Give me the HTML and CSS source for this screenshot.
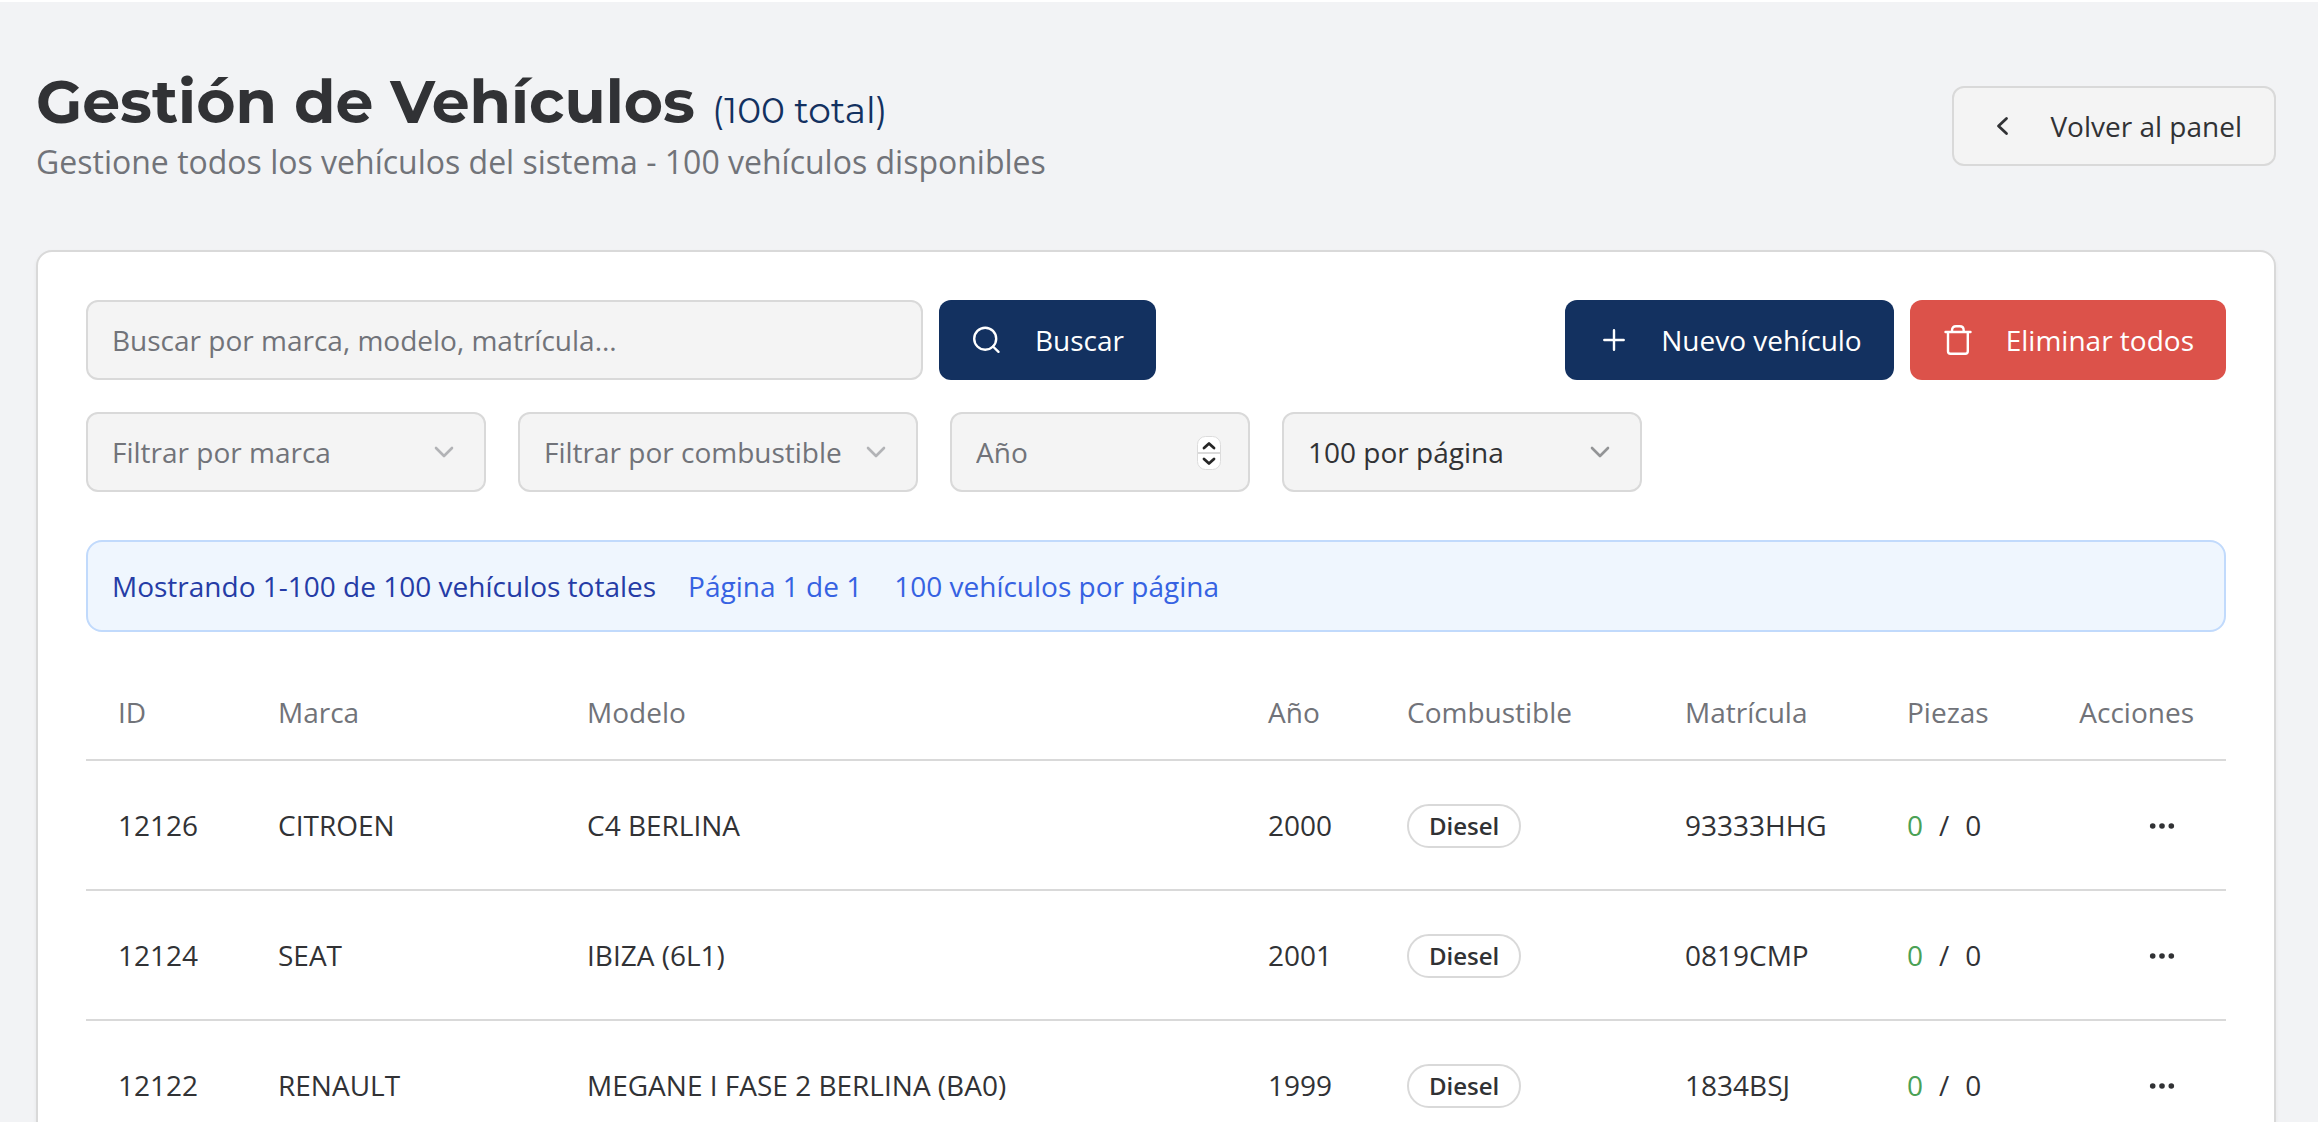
FILE: index.html
```html
<!DOCTYPE html>
<html lang="es">
<head>
<meta charset="utf-8">
<meta name="viewport" content="width=device-width, initial-scale=1">
<title>Gestión de Vehículos</title>
<link rel="stylesheet" href="styles.css">
</head>
<body>
<main class="page">
  <header class="page-header">
    <div class="heading">
      <h1 class="title">Gestión de Vehículos <span class="title-count">(100 total)</span></h1>
      <p class="subtitle">Gestione todos los vehículos del sistema - 100 vehículos disponibles</p>
    </div>
    <button type="button" class="btn btn-outline">
      <svg class="icon" viewBox="0 0 32 32" aria-hidden="true"><path d="M20.500 8.500L12.500 16L20.500 23.500" stroke-width="2.800"/></svg>
      Volver al panel
    </button>
  </header>

  <section class="card">
    <div class="toolbar">
      <form class="search">
        <input class="field search-input" type="search" aria-label="Buscar vehículos" placeholder="Buscar por marca, modelo, matrícula...">
        <button type="button" class="btn btn-primary">
          <svg class="icon" viewBox="0 0 32 32" aria-hidden="true"><circle cx="14.200" cy="14.700" r="11"/><path d="M22 22.500L27.500 27.800"/></svg>
          Buscar
        </button>
      </form>
      <div class="actions">
        <button type="button" class="btn btn-primary">
          <svg class="icon" viewBox="0 0 32 32" aria-hidden="true"><path d="M17 6.300V25.700M7.300 16H26.700"/></svg>
          Nuevo vehículo
        </button>
        <button type="button" class="btn btn-danger">
          <svg class="icon" viewBox="0 0 32 32" aria-hidden="true"><path d="M3.500 8H28.500M6 8V27.300Q6 29.800 8.500 29.800H23.300Q25.800 29.800 25.800 27.300V8M10 8V6.500Q10 2.300 14 2.300H17.700Q21.700 2.300 21.700 6.500V8"/></svg>
          Eliminar todos
        </button>
      </div>
    </div>

    <div class="filters">
      <select class="field select select-wide is-placeholder" aria-label="Marca"><option>Filtrar por marca</option></select>
      <select class="field select select-wide is-placeholder" aria-label="Combustible"><option>Filtrar por combustible</option></select>
      <div class="year">
        <input class="field year-input" type="number" aria-label="Año" placeholder="Año">
        <svg class="stepper" viewBox="0 0 24 34" aria-hidden="true"><rect x="0.500" y="0.500" width="23" height="33" rx="8" fill="#fff" stroke="#dcdcdc"/><path d="M1 17H23" stroke="#d9d9d9" stroke-width="2"/><path d="M7 12L12 7.500L17 12M7 23L12 27.500L17 23" fill="none" stroke="#262626" stroke-width="2.800" stroke-linecap="round" stroke-linejoin="round"/></svg>
      </div>
      <select class="field select select-page" aria-label="Vehículos por página"><option>100 por página</option></select>
    </div>

    <div class="summary">
      <span class="summary-main">Mostrando 1-100 de 100 vehículos totales</span>
      <span>Página 1 de 1</span>
      <span>100 vehículos por página</span>
    </div>

    <table class="vehicles">
      <colgroup><col class="c-id"><col class="c-brand"><col><col class="c-year"><col class="c-fuel"><col class="c-plate"><col class="c-parts"><col class="c-actions"></colgroup>
      <thead>
        <tr><th>ID</th><th>Marca</th><th>Modelo</th><th>Año</th><th>Combustible</th><th>Matrícula</th><th>Piezas</th><th class="end">Acciones</th></tr>
      </thead>
      <tbody>
        <tr>
          <td>12126</td><td>CITROEN</td><td>C4 BERLINA</td><td>2000</td><td><span class="badge">Diesel</span></td><td>93333HHG</td>
          <td><div class="parts"><span class="parts-ok">0</span><span>/</span><span>0</span></div></td>
          <td class="end"><button type="button" class="menu" aria-label="Acciones"><svg class="icon icon-dots" viewBox="0 0 32 32" aria-hidden="true"><circle cx="6.700" cy="17" r="2.800"/><circle cx="16" cy="17" r="2.800"/><circle cx="25.300" cy="17" r="2.800"/></svg></button></td>
        </tr>
        <tr>
          <td>12124</td><td>SEAT</td><td>IBIZA (6L1)</td><td>2001</td><td><span class="badge">Diesel</span></td><td>0819CMP</td>
          <td><div class="parts"><span class="parts-ok">0</span><span>/</span><span>0</span></div></td>
          <td class="end"><button type="button" class="menu" aria-label="Acciones"><svg class="icon icon-dots" viewBox="0 0 32 32" aria-hidden="true"><circle cx="6.700" cy="17" r="2.800"/><circle cx="16" cy="17" r="2.800"/><circle cx="25.300" cy="17" r="2.800"/></svg></button></td>
        </tr>
        <tr>
          <td>12122</td><td>RENAULT</td><td>MEGANE I FASE 2 BERLINA (BA0)</td><td>1999</td><td><span class="badge">Diesel</span></td><td>1834BSJ</td>
          <td><div class="parts"><span class="parts-ok">0</span><span>/</span><span>0</span></div></td>
          <td class="end"><button type="button" class="menu" aria-label="Acciones"><svg class="icon icon-dots" viewBox="0 0 32 32" aria-hidden="true"><circle cx="6.700" cy="17" r="2.800"/><circle cx="16" cy="17" r="2.800"/><circle cx="25.300" cy="17" r="2.800"/></svg></button></td>
        </tr>
      </tbody>
    </table>
  </section>
</main>
</body>
</html>
```

FILE: styles.css
```css
* { box-sizing: border-box; }

html { overflow: hidden; }

body {
  margin: 0;
  background: #f2f3f5;
  border-top: 2px solid #fff;
  color: #313235;
  font: 28px/40px "Open Sans", sans-serif;
}

button, input, select { font: inherit; color: inherit; margin: 0; }

.page { padding: 64px 42px 0 36px; }

.page-header {
  display: flex;
  align-items: center;
  justify-content: space-between;
  margin-bottom: 64px;
}

.title {
  margin: 0;
  font: 700 60px/72px Montserrat, Inter, sans-serif;
}

.title-count {
  color: #133160;
  font-size: 36px;
  font-weight: 400;
  line-height: 40px;
}

.subtitle {
  margin: 0;
  color: #717379;
  font-size: 32px;
  line-height: 48px;
}

.btn {
  display: inline-flex;
  align-items: center;
  height: 80px;
  padding: 0 32px;
  gap: 32px;
  border: 0;
  border-radius: 12px;
  white-space: nowrap;
}

.btn-outline {
  border: 2px solid #d9d9d9;
  background: #f4f4f4;
}

.btn-primary { background: #133160; color: #fff; }
.btn-danger { background: #dc524a; color: #fff; }

.icon {
  width: 32px;
  height: 32px;
  flex: none;
  fill: none;
  stroke: currentColor;
  stroke-width: 2.4;
  stroke-linecap: round;
  stroke-linejoin: round;
}

.icon-dots { fill: currentColor; stroke: none; }

.card {
  padding: 48px;
  border: 2px solid #d9d9d9;
  border-radius: 16px;
  background: #fff;
  box-shadow: 0 2px 4px rgba(0, 0, 0, 0.05);
}

.toolbar, .actions, .search, .filters, .summary { display: flex; }
.toolbar { justify-content: space-between; gap: 32px; }
.actions, .search { gap: 16px; }

.field {
  height: 80px;
  padding: 0 24px;
  border: 2px solid #d9d9d9;
  border-radius: 12px;
  background: #f4f4f4;
}

.field::placeholder { color: #717379; opacity: 1; }

.search-input { width: 837px; appearance: none; }

.filters { gap: 32px; margin-top: 32px; }

.select {
  appearance: none;
  background: #f4f4f4 url("data:image/svg+xml,%3Csvg xmlns='http://www.w3.org/2000/svg' viewBox='0 0 32 32'%3E%3Cpath d='M8 12L16 20L24 12' fill='none' stroke='%23939496' stroke-width='2.600' stroke-linecap='round' stroke-linejoin='round'/%3E%3C/svg%3E") no-repeat right 24px center / 32px 32px;
}

.is-placeholder {
  color: #717379;
  background-image: url("data:image/svg+xml,%3Csvg xmlns='http://www.w3.org/2000/svg' viewBox='0 0 32 32'%3E%3Cpath d='M8 12L16 20L24 12' fill='none' stroke='%23b2b3b6' stroke-width='2.600' stroke-linecap='round' stroke-linejoin='round'/%3E%3C/svg%3E");
}

.select-wide { width: 400px; }
.select-page { width: 360px; }

.year { display: flex; position: relative; }
.year-input { width: 300px; appearance: textfield; }
.year-input::-webkit-inner-spin-button { appearance: none; }

.stepper {
  position: absolute;
  right: 29px;
  top: 24px;
  width: 24px;
  height: 34px;
}

.summary {
  gap: 32px;
  margin: 48px 0 32px;
  padding: 24px;
  border: 2px solid #c1dafc;
  border-radius: 16px;
  background: #eff6fe;
  color: #3662e2;
}

.summary-main { color: #253ca6; }

.vehicles {
  width: 100%;
  table-layout: fixed;
  border-collapse: separate;
  border-spacing: 0;
}

.vehicles th, .vehicles td {
  padding: 0 32px;
  border-bottom: 2px solid #d9d9d9;
  text-align: left;
  white-space: nowrap;
}

.vehicles th { height: 97px; color: #717379; font-weight: 400; }
.vehicles td { height: 130px; }
.vehicles .end { text-align: right; }

.c-id { width: 160px; }
.c-brand { width: 309px; }
.c-year { width: 139px; }
.c-fuel { width: 278px; }
.c-plate { width: 222px; }
.c-parts { width: 171px; }
.c-actions { width: 180px; }

.badge {
  display: inline-block;
  padding: 4px 20px;
  border: 2px solid #d9d9d9;
  border-radius: 22px;
  font-size: 24px;
  font-weight: 600;
  line-height: 32px;
  vertical-align: middle;
}

.parts { display: flex; gap: 16px; }
.parts-ok { color: #4aa155; }

.menu {
  display: inline-flex;
  align-items: center;
  justify-content: center;
  width: 64px;
  height: 64px;
  padding: 0;
  border: 0;
  background: none;
  vertical-align: middle;
}
```
